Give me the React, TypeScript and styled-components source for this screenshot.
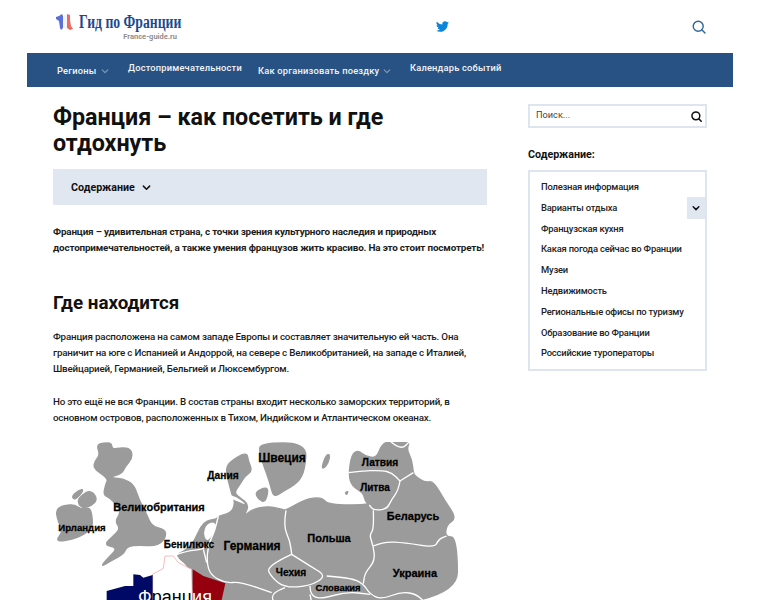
import React from "react";
import styled, { createGlobalStyle } from "styled-components";

const Global = createGlobalStyle`
  html, body { margin: 0; padding: 0; background: #fff; }
  body { font-family: Roboto, "Liberation Sans", sans-serif; color: #111; height: 600px; overflow: hidden; }
`;

const Page = styled.div`
  width: 760px;
  height: 600px;
  overflow: hidden;
`;

const Header = styled.header`
  height: 53px;
  display: flex;
  align-items: flex-start;
  padding: 0 54px 0 56px;
  box-sizing: border-box;
`;

const Logo = styled.div`
  width: 121px;
  flex: none;
  padding-top: 13px;
`;

const LogoRow = styled.div`
  display: flex;
  align-items: center;
  gap: 5px;
  height: 19px;
`;

const LogoMark = styled.svg`
  flex: none;
`;

const LogoTitle = styled.span`
  font-family: "Liberation Serif", serif;
  font-weight: 700;
  font-size: 18px;
  line-height: 19px;
  color: #1a4a90;
  width: 98px;
  white-space: nowrap;
  transform: scaleX(0.76);
  transform-origin: left center;
`;

const LogoSub = styled.div`
  text-align: right;
  font-size: 7.5px;
  line-height: 8px;
  margin-top: 1px;
  font-weight: 700;
  color: #8f8f8f;
`;

const Social = styled.div`
  flex: 1;
  display: flex;
  justify-content: center;
  padding: 20px 0 0 15px;
`;

const HeaderSearch = styled.div`
  padding-top: 19px;
`;

const Nav = styled.nav`
  margin: 0 27px;
  height: 34px;
  background: #285283;
  display: flex;
  align-items: flex-start;
  padding-left: 30px;
  box-sizing: border-box;
`;

const NavItem = styled.a<{ $drop?: boolean; $w: number }>`
  width: ${(p) => p.$w}px;
  flex: none;
  display: flex;
  align-items: center;
  gap: 4px;
  color: #f2f5f9;
  font-size: 9.3px;
  font-weight: 500;
  letter-spacing: 0.2px;
  line-height: 14px;
  white-space: nowrap;
  padding-top: ${(p) => (p.$drop ? 11 : 8)}px;
`;

const Layout = styled.div`
  display: flex;
  padding: 17px 53px 0;
  gap: 41px;
`;

const Main = styled.main`
  width: 434px;
  flex: none;
`;

const Side = styled.aside`
  width: 179px;
  flex: none;
`;

const Title = styled.h1`
  margin: 0;
  font-size: 23.3px;
  line-height: 26px;
  font-weight: 700;
  color: #111;
`;

const TocBar = styled.div`
  margin-top: 13px;
  height: 36px;
  background: #e1e7f1;
  display: flex;
  align-items: center;
  gap: 7px;
  padding-left: 18px;
  font-size: 10.7px;
  font-weight: 700;
`;

const Para = styled.p`
  margin: 0 0 16px;
  font-size: 9.8px;
  letter-spacing: -0.19px;
  line-height: 16.35px;
  font-weight: 500;
  color: #1c1c1c;
  white-space: nowrap;
`;

const Lead = styled(Para)`
  font-size: 9.9px;
  font-weight: 700;
  letter-spacing: -0.17px;
  margin: 19px 0 0;
`;

const Heading = styled.h2`
  margin: 33px 0 13px;
  font-size: 18.8px;
  line-height: 26px;
  font-weight: 700;
`;

const MapFigure = styled.svg`
  display: block;
  width: 405px;
  height: 159px;
`;

const SearchBox = styled.div`
  height: 24px;
  box-sizing: border-box;
  border: 2px solid #dfe5ee;
  display: flex;
  align-items: center;
  justify-content: space-between;
  padding: 0 3px 0 6px;
`;

const SearchHint = styled.span`
  font-size: 9.2px;
  color: #444;
  margin-top: -3px;
`;

const SideTitle = styled.div`
  margin-top: 20px;
  font-size: 10.7px;
  line-height: 14px;
  font-weight: 700;
`;

const TocBox = styled.ul`
  position: relative;
  list-style: none;
  margin: 8px 0 0;
  padding: 5px 0 7px 11px;
  border: 2px solid #dfe5ee;
  box-sizing: border-box;
  height: 201px;
`;

const TocItem = styled.li`
  height: 20.8px;
  line-height: 20.8px;
  font-size: 9.4px;
  letter-spacing: -0.2px;
  font-weight: 500;
  color: #222;
  white-space: nowrap;
`;

const Toggler = styled.span`
  position: absolute;
  right: 0;
  top: 25px;
  width: 18px;
  height: 22px;
  background: #e1e7f1;
  display: flex;
  align-items: center;
  justify-content: center;
`;

const Chevron = ({ color, size = 8, width = 1.2 }: { color: string; size?: number; width?: number }) => (
  <svg width={size} height={size} viewBox="0 0 10 10" fill="none" stroke={color} strokeWidth={width * (10 / size)} strokeLinecap="round" strokeLinejoin="round">
    <path d="M1.5 3.5 5 7l3.5-3.5" />
  </svg>
);

const Magnifier = ({ color, size, width }: { color: string; size: number; width: number }) => (
  <svg width={size} height={size} viewBox="0 0 14 14" fill="none" stroke={color} strokeWidth={width} strokeLinecap="round">
    <circle cx="6.2" cy="6.2" r="5" />
    <path d="M10 10l3 3" />
  </svg>
);

const pts = (s: string) => s.trim().split(/\s+/).map((p) => p.split(",").map(Number));

const closed = (s: string) => {
  const p = pts(s);
  const mid = (a: number[], b: number[]) => `${(a[0] + b[0]) / 2} ${(a[1] + b[1]) / 2}`;
  let d = `M${mid(p[p.length - 1], p[0])}`;
  p.forEach((c, i) => {
    d += `Q${c[0]} ${c[1]} ${mid(c, p[(i + 1) % p.length])}`;
  });
  return d + "Z";
};

const open = (s: string) => {
  const p = pts(s);
  let d = `M${p[0][0]} ${p[0][1]}`;
  for (let i = 1; i < p.length - 1; i++) {
    d += `Q${p[i][0]} ${p[i][1]} ${(p[i][0] + p[i + 1][0]) / 2} ${(p[i][1] + p[i + 1][1]) / 2}`;
  }
  const l = p[p.length - 1];
  return d + `L${l[0]} ${l[1]}`;
};

const islands = [
  "170,42 190,36 215,36 216,55 245,50 272,53 278,80 255,108 245,128 205,140 250,143 280,160 292,190 300,212 320,250 335,285 375,296 378,315 365,335 340,345 300,342 262,345 250,370 215,388 182,408 200,385 235,350 190,342 225,310 240,292 225,270 245,240 210,200 190,192 197,160 205,142 160,112 165,90 180,72",
  "94,195 125,173 130,180 105,208",
  "110,208 140,181 158,183 172,205 155,225 125,232",
  "46,230 100,218 125,236 150,228 158,265 155,295 110,322 44,334 70,300 55,275",
  "658,68 660,36 800,36 795,115 775,155 730,180 700,200 690,155",
  "645,183 678,168 685,180 675,215 655,205",
  "845,110 858,72 870,70 865,95 852,112",
  "915,185 925,180 920,192",
  "746,148 752,146 755,153 748,156",
];

const mainland =
  "458,415 405,372 430,362 458,340 490,270 530,265 535,255 575,245 585,215 578,198 565,150 558,120 565,95 620,62 625,90 637,120 615,135 600,160 582,185 600,200 628,222 610,258 635,235 685,225 725,235 738,238 795,205 845,198 865,222 988,222 975,210 970,185 935,165 926,130 935,70 955,58 975,75 1010,82 1025,40 1050,30 1110,30 1100,55 1115,85 1120,125 1125,135 1155,155 1180,150 1215,210 1250,262 1220,280 1215,318 1252,318 1252,530 458,530";

const inlets = ["490,305 500,280 522,272 530,288 512,322 498,330", "560,190 590,197 620,222 600,214 575,205"];

const borders = [
  "925,125 960,120 1025,118 1055,125 1080,150",
  "1080,150 1120,125",
  "1050,30 1082,58 1110,30",
  "1080,150 1075,178 1055,205 1040,235 1000,238 988,222",
  "1000,238 1002,295 988,312 1000,345 1005,390 975,425 970,458",
  "1000,345 1030,332 1095,335 1185,350 1195,325 1220,315",
  "738,238 730,285 750,330 755,370",
  "755,370 678,405 695,440 735,470 810,465 860,435 810,405 755,370",
  "860,435 930,440 970,458 990,490 1025,505 1085,482 1130,490 1155,515",
  "810,465 810,490 840,505 920,482 990,490",
  "735,470 695,485 700,515",
  "810,490 815,515",
  "535,255 525,300 505,340 500,395 512,432 556,457 600,452 695,485",
  "405,372 440,360 490,355 505,340",
  "490,355 500,395",
];

const labels: [string, number, number, number][] = [
  ["Ирландия", 82, 530, 9.6],
  ["Великобритания", 159, 510, 11],
  ["Дания", 223, 478, 10.2],
  ["Швеция", 282, 461, 12],
  ["Латвия", 380, 465, 10.2],
  ["Литва", 375, 490, 10],
  ["Беларусь", 413, 519, 11],
  ["Польша", 329, 541, 11],
  ["Бенилюкс", 189, 547, 10],
  ["Германия", 252, 549, 12],
  ["Чехия", 291, 575, 10.2],
  ["Словакия", 338, 590, 9.4],
  ["Украина", 415, 576, 11],
];

const toc = [
  "Полезная информация",
  "Варианты отдыха",
  "Французская кухня",
  "Какая погода сейчас во Франции",
  "Музеи",
  "Недвижимость",
  "Региональные офисы по туризму",
  "Образование во Франции",
  "Российские туроператоры",
];

export default function App() {
  return (
    <Page>
      <Global />
      <Header>
        <Logo>
          <LogoRow>
            <LogoMark width="18" height="19" viewBox="0 0 18 19">
              <path d="M0 4l3-1 3-2 1 2v12l-2 2-1-2-1-7-3-2z" fill="#5a6fd8" />
              <path d="M7 3l4-2v16l-4-3z" fill="#f3f3fb" />
              <path d="M11 1l3 1v5l1 6 2 3-3 1-3-2z" fill="#ee6a60" />
            </LogoMark>
            <LogoTitle>Гид по Франции</LogoTitle>
          </LogoRow>
          <LogoSub>France-guide.ru</LogoSub>
        </Logo>
        <Social>
          <svg width="13" height="13" viewBox="0 0 24 24" fill="#0a84dc">
            <path d="M23.95 4.57a10 10 0 0 1-2.82.77 4.96 4.96 0 0 0 2.16-2.72 9.9 9.9 0 0 1-3.12 1.19 4.92 4.92 0 0 0-8.38 4.48A13.97 13.97 0 0 1 1.64 3.16a4.92 4.92 0 0 0 1.52 6.57 4.9 4.9 0 0 1-2.23-.62v.06a4.92 4.92 0 0 0 3.95 4.83 5 5 0 0 1-2.21.08 4.94 4.94 0 0 0 4.6 3.42A9.87 9.87 0 0 1 0 19.54a13.94 13.94 0 0 0 7.55 2.21c9.05 0 14-7.5 14-13.98 0-.21 0-.42-.02-.63a10 10 0 0 0 2.46-2.55z" />
          </svg>
        </Social>
        <HeaderSearch>
          <Magnifier color="#2f6699" size={14} width={1.4} />
        </HeaderSearch>
      </Header>
      <Nav>
        <NavItem $drop $w={71}>Регионы <Chevron color="#7f9ab9" /></NavItem>
        <NavItem $w={130}>Достопримечательности</NavItem>
        <NavItem $drop $w={152}>Как организовать поездку <Chevron color="#7f9ab9" /></NavItem>
        <NavItem $w={100}>Календарь событий</NavItem>
      </Nav>
      <Layout>
        <Main>
          <Title>Франция – как посетить и где отдохнуть</Title>
          <TocBar>Содержание <Chevron color="#111" size={9} width={1.5} /></TocBar>
          <Lead>
            Франция – удивительная страна, с точки зрения культурного наследия и природных
            <br />
            достопримечательностей, а также умения французов жить красиво. На это стоит посмотреть!
          </Lead>
          <Heading>Где находится</Heading>
          <Para>
            Франция расположена на самом западе Европы и составляет значительную ей часть. Она
            <br />
            граничит на юге с Испанией и Андоррой, на севере с Великобританией, на западе с Италией,
            <br />
            Швейцарией, Германией, Бельгией и Люксембургом.
          </Para>
          <Para>
            Но это ещё не вся Франции. В состав страны входит несколько заморских территорий, в
            <br />
            основном островов, расположенных в Тихом, Индийском и Атлантическом океанах.
          </Para>
          <MapFigure viewBox="39 33 1215 477" role="img">
            <g fill="#9b9b9b" stroke="#9b9b9b" strokeWidth="4" strokeLinejoin="round">
              {islands.map((s) => (
                <path key={s} d={closed(s)} />
              ))}
              <path d={closed(mainland)} />
            </g>
            <g fill="#fff">
              {inlets.map((s) => (
                <path key={s} d={closed(s)} />
              ))}
            </g>
            <g fill="none" stroke="#fff" strokeWidth="4" strokeLinejoin="round">
              {borders.map((s) => (
                <path key={s} d={open(s)} />
              ))}
            </g>
            <path d="M338 430L370 412L375 375L400 375L415 395L455 415L458 530L338 530Z" fill="#fff" stroke="#f19a9a" strokeWidth="2" />
            <path d="M200 480L255 465L280 465L280 430L300 432L310 440L338 432L338 530L200 530Z" fill="#000a66" />
            <path d="M458 415L490 435L556 457L540 530L458 530Z" fill="#96000e" />
            {labels.map(([t, x, y, s]) => (
              <text
                key={t}
                x={(x - 40) * 3}
                y={(y - 430) * 3}
                textAnchor="middle"
                fontFamily="'Liberation Sans', sans-serif"
                fontWeight="700"
                fontSize={s * 3}
                fill="#000"
                stroke="#000"
                strokeWidth="0.8"
              >
                {t}
              </text>
            ))}
            <text x={405} y={516} textAnchor="middle" fontFamily="'Liberation Sans', sans-serif" fontSize="54" fontWeight="400">
              <tspan fill="#fff">Ф</tspan>
              <tspan fill="#000">ранц</tspan>
              <tspan fill="#fff">ия</tspan>
            </text>
          </MapFigure>
        </Main>
        <Side>
          <SearchBox>
            <SearchHint>Поиск...</SearchHint>
            <Magnifier color="#111" size={11} width={1.9} />
          </SearchBox>
          <SideTitle>Содержание:</SideTitle>
          <TocBox>
            {toc.map((t) => (
              <TocItem key={t}>{t}</TocItem>
            ))}
            <Toggler>
              <Chevron color="#111" size={8} width={1.5} />
            </Toggler>
          </TocBox>
        </Side>
      </Layout>
    </Page>
  );
}
